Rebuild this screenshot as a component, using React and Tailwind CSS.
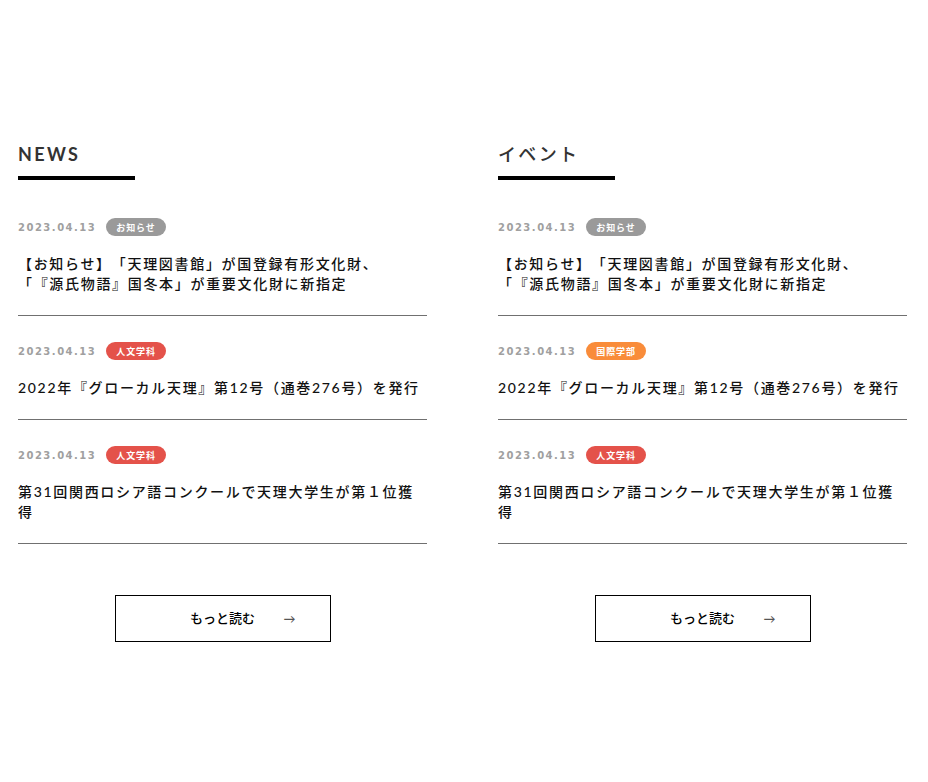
import { useState } from "react";

const jp = "font-['Lato','Noto_Sans_CJK_JP',sans-serif]";

const badgeColors = {
  gray: "bg-[#9a9a9a]",
  red: "bg-[#e4524a]",
  orange: "bg-[#f98c3a]",
};

const newsItems = [
  {
    date: "2023.04.13",
    tag: "お知らせ",
    color: "gray",
    title: ["【お知らせ】「天理図書館」が国登録有形文化財、", "「『源氏物語』国冬本」が重要文化財に新指定"],
  },
  {
    date: "2023.04.13",
    tag: "人文学科",
    color: "red",
    title: ["2022年『グローカル天理』第12号（通巻276号）を発行"],
  },
  {
    date: "2023.04.13",
    tag: "人文学科",
    color: "red",
    title: ["第31回関西ロシア語コンクールで天理大学生が第１位獲得"],
  },
];

const eventItems = [
  { ...newsItems[0] },
  { ...newsItems[1], tag: "国際学部", color: "orange" },
  { ...newsItems[2] },
];

function Item({ item, first }) {
  return (
    <li className={`border-b border-[#707070] pb-[21px] ${first ? "pt-[38px]" : "pt-[26px]"}`}>
      <div className="flex items-center h-[18px]">
        <span className="font-['DejaVu_Sans',sans-serif] text-[10px] font-bold tracking-[0.15em] text-[#a0a0a0] leading-none mt-[2px]">
          {item.date}
        </span>
        <span
          className={`ml-[10px] h-[18px] px-[10px] rounded-full text-white text-[9px] font-bold tracking-[0.1em] flex items-center leading-none ${badgeColors[item.color]}`}
        >
          {item.tag}
        </span>
      </div>
      <p className="mt-[18px] text-[14px] leading-[20px] font-medium tracking-[0.12em] text-[#111] [text-spacing-trim:space-all]">
        {item.title.map((line, i) => (
          <span key={i} className="block">
            {line}
          </span>
        ))}
      </p>
    </li>
  );
}

function Section({ heading, items, light }) {
  const [hover, setHover] = useState(false);
  return (
    <section>
      <h2
        className={`text-[18px] tracking-[0.13em] text-[#333] leading-[18px] ${light ? "font-medium" : "font-bold"}`}
      >
        {heading}
      </h2>
      <div className="mt-[13px] h-[4px] w-[117px] bg-black" />
      <ul>
        {items.map((item, i) => (
          <Item key={i} item={item} first={i === 0} />
        ))}
      </ul>
      <div className="flex justify-center mt-[51px]">
        <a
          href="#"
          onMouseEnter={() => setHover(true)}
          onMouseLeave={() => setHover(false)}
          className={`relative w-[216px] h-[47px] border border-black flex items-center justify-center text-[13px] font-medium text-black ${hover ? "bg-gray-50" : "bg-white"}`}
        >
          <span>もっと読む</span>
          {/* arrow */}
          <span className="absolute right-[34px] top-1/2 -translate-y-1/2 text-[12px] text-[#555]">→</span>
        </a>
      </div>
    </section>
  );
}

export default function App() {
  return (
    <div className={`${jp} bg-white min-h-[782px] pt-[145px] pl-[18px] pr-[21px]`}>
      <div className="grid grid-cols-2 gap-x-[71px]">
        <Section heading="NEWS" items={newsItems} />
        <Section heading="イベント" items={eventItems} light />
      </div>
    </div>
  );
}
